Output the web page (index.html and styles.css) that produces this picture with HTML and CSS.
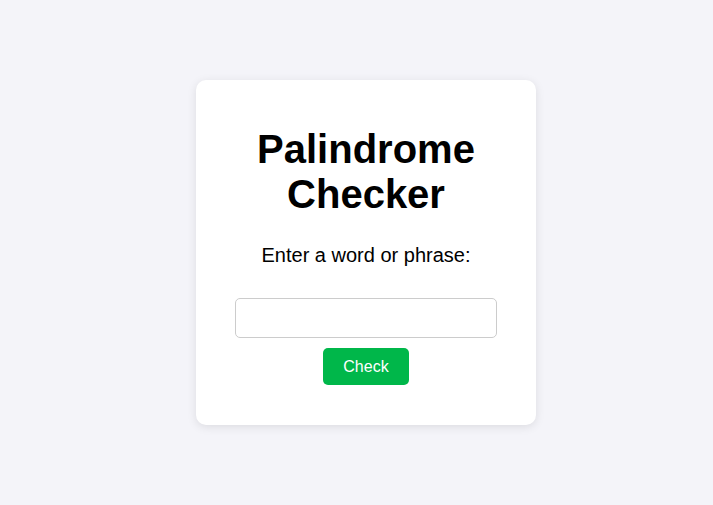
FILE: index.html
```html
<!DOCTYPE html>
<html lang="en">
<head>
  <meta charset="UTF-8">
  <title>Palindrome Checker</title>
  <link rel="stylesheet" href="styles.css">
</head>
<body>

<div class="container">
  <h1>Palindrome Checker</h1>
  <p class="prompt">Enter a word or phrase:</p>
  <input type="text" id="textInput" class="text-input">
  <button id="checkBtn" class="btn">Check</button>
  <p id="result" class="result"></p>
</div>

</body>
</html>
```

FILE: styles.css
```css
*{box-sizing:border-box}
body{margin:0;padding:0 0 0 19px;background:#f4f4f9;font-family:"Liberation Sans",Arial,sans-serif;color:#000;display:flex;justify-content:center;align-items:center;height:100vh}
.container{width:340px;background:#fff;padding:20px;border-radius:10px;box-shadow:0 2px 10px rgba(0,0,0,.1);text-align:center}
h1{font-size:40px;margin:27px 0}
.prompt{font-size:20px;margin:24px 0 20px}
.text-input{display:block;width:262px;height:40px;margin:31px auto 10px;padding:10px;font-size:16px;border:1px solid #ccc;border-radius:5px}
.btn{background:#00b74a;color:#fff;border:none;padding:10px 20px;font-size:16px;font-family:inherit;border-radius:5px;cursor:pointer;height:37px}
.result{margin:20px 0;font-size:18px}
```
